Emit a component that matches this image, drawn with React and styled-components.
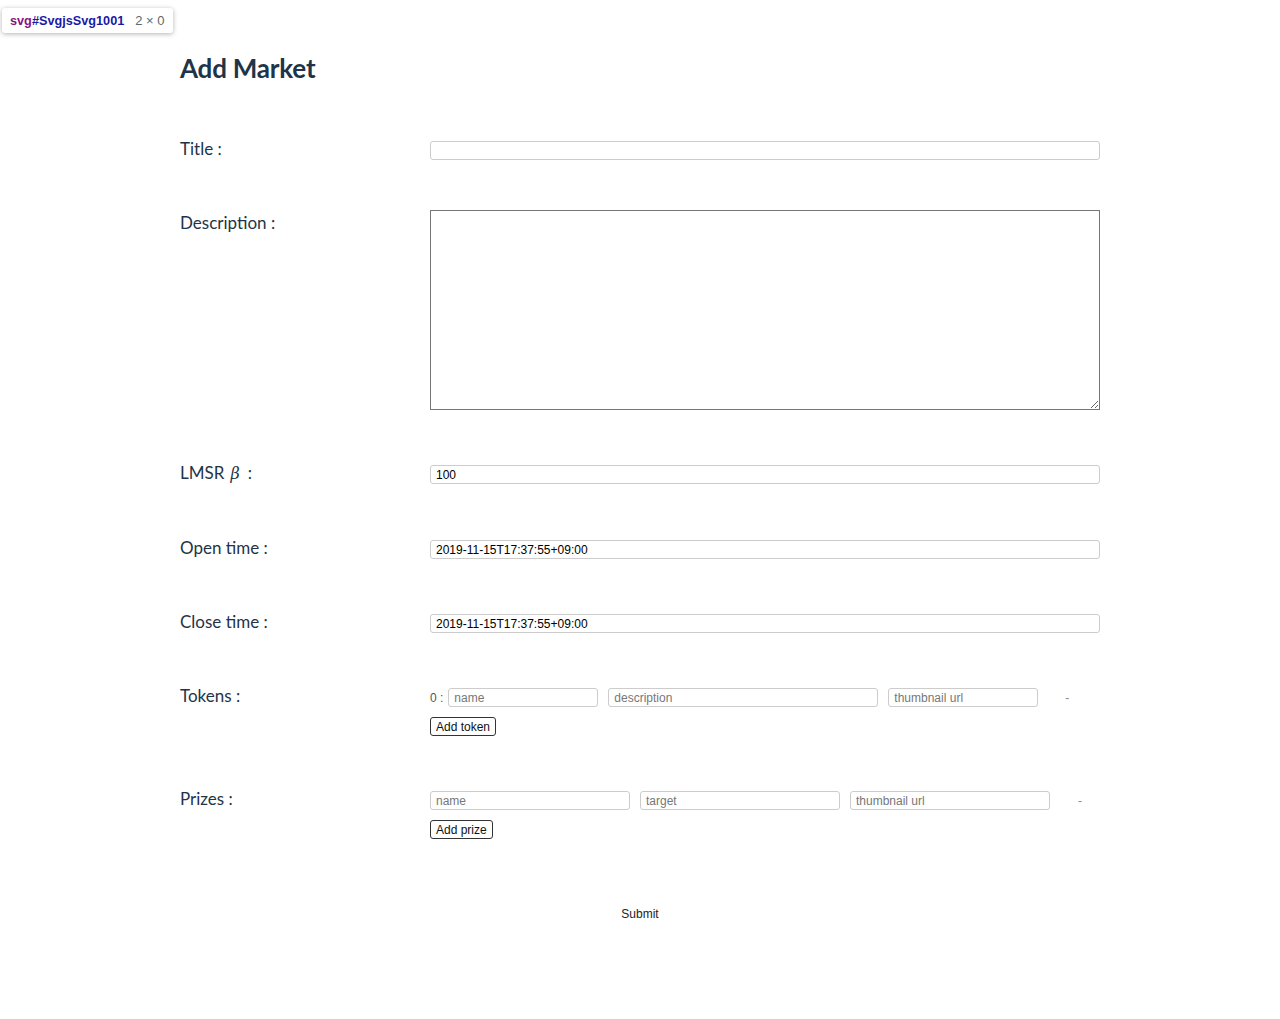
import React from 'react'
import styled, { createGlobalStyle } from 'styled-components'

const GlobalStyle = createGlobalStyle`
  body {
    margin: 0;
    background: #fff;
    font-family: Lato, "Noto Sans", sans-serif;
  }
`

const InspectTip = styled.div`
  position: absolute;
  left: 2px;
  top: 8px;
  height: 25px;
  padding: 0 8px;
  display: flex;
  align-items: center;
  gap: 11px;
  background: #fff;
  border-radius: 3px;
  box-shadow: 0 1px 5px rgba(0, 0, 0, 0.3);
  font-family: "Liberation Sans", Arial, sans-serif;
  font-size: 12.7px;
  .tag { color: #881280; font-weight: bold; }
  .id { color: #1a1aa6; font-weight: bold; }
  .size { color: #666; font-size: 13px; }
`

const Page = styled.div`
  width: 920px;
  margin: 0 auto;
  padding-top: 52px;
  color: #1e3448;
`

const Heading = styled.h1`
  margin: 0 0 57px;
  font-size: 26px;
  line-height: 32px;
  font-weight: 700;
  letter-spacing: -0.2px;
`

const Form = styled.form`
  display: flex;
  flex-direction: column;
  gap: 55px;
`

const Row = styled.div`
  display: grid;
  grid-template-columns: 250px 670px;
  align-items: start;
  margin-bottom: ${p => p.$shift || 0}px;
`

const Label = styled.label`
  font-size: 17px;
  line-height: ${p => p.$lh || 16}px;
  i {
    font-family: "DejaVu Serif", serif;
    font-size: 16px;
    margin: 0 8px 0 6px;
  }
`

const Field = styled.input`
  box-sizing: border-box;
  width: ${p => p.$w ? p.$w + 'px' : '100%'};
  height: 19px;
  padding: 0 5px;
  border: 1px solid #ccc;
  border-radius: 3px;
  font-family: "Liberation Sans", Arial, sans-serif;
  font-size: 12px;
  color: #000;
  outline: none;
  &::placeholder { color: #777; }
`

const Area = styled.textarea`
  box-sizing: border-box;
  display: block;
  width: 100%;
  height: 200px;
  border: 1px solid #767676;
  border-radius: 0;
  outline: none;
`

const Stack = styled.div`
  display: flex;
  flex-direction: column;
  align-items: flex-start;
  gap: 10px;
`

const Line = styled.div`
  display: flex;
  align-items: center;
  gap: 10px;
  font-family: "Liberation Sans", Arial, sans-serif;
  font-size: 12px;
  color: #555;
`

const Index = styled.span`
  margin-right: -5px;
`

const Remove = styled.span`
  margin-left: ${p => p.$gap}px;
  color: #888;
`

const SmallButton = styled.button`
  height: 19px;
  padding: 0 5px;
  background: #fff;
  border: 1px solid #333;
  border-radius: 3px;
  font-family: "Liberation Sans", Arial, sans-serif;
  font-size: 12px;
  color: #111;
`

const SubmitRow = styled.div`
  display: flex;
  justify-content: center;
  margin-top: 10px;
`

const Submit = styled.button`
  height: 19px;
  background: none;
  border: none;
  font-family: "Liberation Sans", Arial, sans-serif;
  font-size: 12px;
  color: #222;
`

export default function App () {
  return (
    <>
      <GlobalStyle />
      <InspectTip>
        <span><span className='tag'>svg</span><span className='id'>#SvgjsSvg1001</span></span>
        <span className='size'>2 × 0</span>
      </InspectTip>
      <Page>
        <Heading>Add Market</Heading>
        <Form onSubmit={e => e.preventDefault()}>
          <Row $shift={-5}>
            <Label>Title :</Label>
            <Field />
          </Row>
          <Row>
            <Label $lh={26}>Description :</Label>
            <Area />
          </Row>
          <Row $shift={1}>
            <Label>LMSR<i>β</i>:</Label>
            <Field defaultValue='100' />
          </Row>
          <Row>
            <Label>Open time :</Label>
            <Field defaultValue='2019-11-15T17:37:55+09:00' />
          </Row>
          <Row>
            <Label>Close time :</Label>
            <Field defaultValue='2019-11-15T17:37:55+09:00' />
          </Row>
          <Row>
            <Label>Tokens :</Label>
            <Stack>
              <Line>
                <Index>0 :</Index>
                <Field $w={150} placeholder='name' />
                <Field $w={270} placeholder='description' />
                <Field $w={150} placeholder='thumbnail url' />
                <Remove $gap={17}>-</Remove>
              </Line>
              <SmallButton type='button'>Add token</SmallButton>
            </Stack>
          </Row>
          <Row>
            <Label>Prizes :</Label>
            <Stack>
              <Line>
                <Field $w={200} placeholder='name' />
                <Field $w={200} placeholder='target' />
                <Field $w={200} placeholder='thumbnail url' />
                <Remove $gap={18}>-</Remove>
              </Line>
              <SmallButton type='button'>Add prize</SmallButton>
            </Stack>
          </Row>
          <SubmitRow>
            <Submit type='submit'>Submit</Submit>
          </SubmitRow>
        </Form>
      </Page>
    </>
  )
}
